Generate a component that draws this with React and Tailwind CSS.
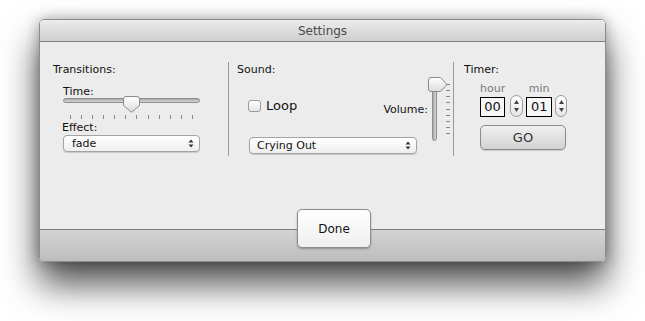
import React from 'react';

const font = { fontFamily: '"DejaVu Sans", Verdana, sans-serif' };

const PopupArrows = () => (
  <svg width="6" height="9" viewBox="0 0 6 9" className="ml-auto">
    <path d="M3 0.5 L5.5 3.5 H0.5 Z" fill="#333" />
    <path d="M3 8.5 L5.5 5.5 H0.5 Z" fill="#333" />
  </svg>
);

const Popup = ({ label, className }) => (
  <div className={`flex items-center h-[17px] rounded-[4px] border border-[#a3a3a3] bg-gradient-to-b from-white to-[#eeeeee] shadow-[0_1px_1px_rgba(0,0,0,0.15)] text-[11px] text-[#111] ${className}`}>
    <span className="leading-none">{label}</span>
    <PopupArrows />
  </div>
);

const Stepper = ({ className }) => (
  <div className={`flex flex-col items-center justify-between h-[22px] rounded-full border border-[#9a9a9a] bg-gradient-to-b from-white to-[#e6e6e6] py-[4px] ${className}`}>
    <svg width="5" height="4" viewBox="0 0 5 4"><path d="M2.5 0 L5 4 H0 Z" fill="#444" /></svg>
    <svg width="5" height="4" viewBox="0 0 5 4"><path d="M2.5 4 L5 0 H0 Z" fill="#444" /></svg>
  </div>
);

const TimeBox = ({ label, value, width }) => (
  <div className="flex flex-col items-center">
    <span className="text-[11px] leading-[14px] text-[#7a7a7a] mb-[1px]">{label}</span>
    <div className={`${width} h-[20px] border border-black bg-[#f7f7f7] flex items-center justify-center text-[13px] text-[#111]`}>{value}</div>
  </div>
);

export default function App() {
  return (
    <div className="w-[645px] h-[321px] bg-white pt-[19px] pl-[39px]" style={font}>
      <div className="relative w-[567px] h-[243px] rounded-[5px] border border-[#8c8c8c] flex flex-col overflow-hidden shadow-[0_22px_36px_rgba(0,0,0,0.7),0_0_14px_rgba(0,0,0,0.3)]">
        {/* title bar */}
        <div className="h-[22px] shrink-0 border-b border-[#7f7f7f] bg-gradient-to-b from-[#ececec] to-[#cecece] flex items-center justify-center">
          <span className="text-[12px] text-[#4a4a4a] leading-none">Settings</span>
        </div>

        {/* body */}
        <div className="h-[187px] shrink-0 bg-[#ececec] pt-[20px] flex">
          {/* transitions */}
          <div className="w-[189px] h-[94px] pl-[13px] border-r border-[#9a9a9a] flex flex-col text-[#111]">
            <span className="text-[11px] leading-[15px]">Transitions:</span>
            <span className="text-[11px] leading-[14px] mt-[8px] ml-[10px]">Time:</span>
            <div className="relative ml-[10px] w-[137px] h-[24px] mt-[-3px]">
              <div className="absolute left-0 right-0 top-[2px] h-[5px] rounded-full border border-[#8d8d8d] bg-gradient-to-b from-[#a9a9a9] to-[#d6d6d6]" />
              <svg className="absolute left-[60px] top-0" width="17" height="17" viewBox="0 0 17 17">
                <defs>
                  <linearGradient id="th" x1="0" y1="0" x2="0" y2="1">
                    <stop offset="0" stopColor="#ffffff" />
                    <stop offset="1" stopColor="#dcdcdc" />
                  </linearGradient>
                </defs>
                <path d="M3 0.5 H14 Q16.5 0.5 16.5 3 V9.5 L8.5 16.3 L0.5 9.5 V3 Q0.5 0.5 3 0.5 Z" fill="url(#th)" stroke="#8a8a8a" />
              </svg>
              <div className="absolute left-[7px] top-[19px] w-[123px] flex justify-between">
                {Array.from({ length: 12 }).map((_, i) => (
                  <div key={i} className="w-px h-[4px] bg-[#8a8a8a]" />
                ))}
              </div>
            </div>
            <span className="text-[11px] leading-[14px] mt-[1px] ml-[9px]">Effect:</span>
            <Popup label="fade" className="ml-[10px] w-[137px] pl-[8px] pr-[5px]" />
          </div>

          {/* sound */}
          <div className="w-[225px] h-[94px] border-r border-[#9a9a9a] flex text-[#111]">
            <div className="w-[199px] flex flex-col">
              <span className="text-[11px] leading-[15px] pl-[8px]">Sound:</span>
              <div className="flex items-start mt-[21px]">
                <div className="flex items-center ml-[19px] h-[15px]">
                  <div className="w-[13px] h-[12px] rounded-[3px] border border-[#9b9b9b] bg-gradient-to-b from-white to-[#e4e4e4]" />
                  <span className="text-[13px] leading-[15px] ml-[5px]">Loop</span>
                </div>
                <span className="ml-auto text-[11px] leading-[14px] mt-[5px]">Volume:</span>
              </div>
              <Popup label="Crying Out" className="mt-[20px] ml-[20px] w-[168px] pl-[7px] pr-[5px]" />
            </div>
            <div className="relative w-[22px] h-[64px] mt-[15px]">
              <div className="absolute left-[4px] top-[10px] w-[5px] h-[54px] rounded-full border border-[#8d8d8d] bg-gradient-to-r from-[#a9a9a9] to-[#d6d6d6]" />
              <svg className="absolute left-0 top-0" width="20" height="15" viewBox="0 0 20 15">
                <defs>
                  <linearGradient id="tv" x1="0" y1="0" x2="0" y2="1">
                    <stop offset="0" stopColor="#ffffff" />
                    <stop offset="1" stopColor="#dcdcdc" />
                  </linearGradient>
                </defs>
                <path d="M3 0.5 H12.5 L19 7.5 L12.5 14.5 H3 Q0.5 14.5 0.5 12 V3 Q0.5 0.5 3 0.5 Z" fill="url(#tv)" stroke="#8a8a8a" />
              </svg>
              <div className="absolute left-[18px] top-[7px] h-[50px] flex flex-col justify-between">
                {Array.from({ length: 9 }).map((_, i) => (
                  <div key={i} className="w-[4px] h-px bg-[#8a8a8a]" />
                ))}
              </div>
            </div>
          </div>

          {/* timer */}
          <div className="flex-1 h-[94px] pl-[10px] flex flex-col text-[#111]">
            <span className="text-[11px] leading-[15px]">Timer:</span>
            <div className="flex items-end mt-[5px] ml-[16px]">
              <TimeBox label="hour" value="00" width="w-[25px]" />
              <Stepper className="w-[13px] ml-[5px]" />
              <div className="ml-[3px]">
                <TimeBox label="min" value="01" width="w-[26px]" />
              </div>
              <Stepper className="w-[12px] ml-[3px]" />
            </div>
            <div className="mt-[8px] ml-[16px] w-[86px] h-[25px] rounded-[5px] border border-[#8a8a8a] bg-gradient-to-b from-[#f0f0f0] to-[#d2d2d2] shadow-[0_1px_1px_rgba(0,0,0,0.15)] flex items-center justify-center text-[13px] text-[#333]">
              GO
            </div>
          </div>
        </div>

        {/* footer */}
        <div className="flex-1 border-t border-[#7f7f7f] bg-gradient-to-b from-[#d3d3d3] to-[#bdbdbd]" />

        <div className="absolute left-[257px] top-[189px] w-[74px] h-[39px] rounded-[5px] border border-[#8c8c8c] bg-gradient-to-b from-white to-[#efefef] shadow-[0_1px_2px_rgba(0,0,0,0.3)] flex items-center justify-center text-[12px] text-[#111]">
          Done
        </div>
      </div>
    </div>
  );
}
